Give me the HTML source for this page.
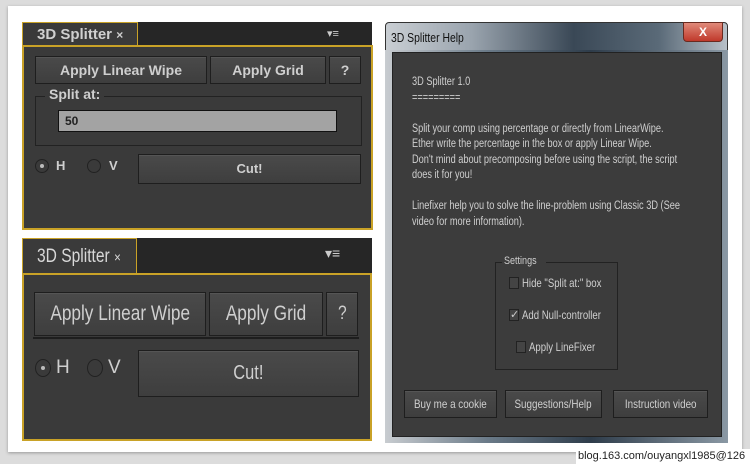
<!DOCTYPE html>
<html><head><style>
*{margin:0;padding:0;box-sizing:border-box}
body{width:750px;height:464px;background:#dcdcdc;position:relative;overflow:hidden;font-family:"Liberation Sans",sans-serif}
.abs{position:absolute}
.card{left:8px;top:6px;width:734px;height:446px;background:#fff;box-shadow:0 1px 3px #999}
.tabbar{background:#262626}
.tab{background:#3a3a3a;border:1px solid #c9a227;border-bottom:none;color:#d8d8d8}
.panel{background:#3a3a3a;border:2px solid #c9a227}
.btn{background:linear-gradient(#4a4a4a,#3e3e3e);border:1px solid #1e1e1e;color:#cfcfcf;text-align:center;box-shadow:inset 0 1px 0 #555;white-space:nowrap}
.radio{border:1px solid #222;border-radius:50%;background:#3a3a3a}
.t{color:#cfcfcf;font-size:14px}
.n{display:inline-block;transform:scaleX(0.82);transform-origin:center}
.nl{white-space:nowrap;transform:scaleX(0.8);transform-origin:left top}
</style></head><body>
<div class="abs card"></div>

<!-- panel 1 -->
<div class="abs tabbar" style="left:22px;top:22px;width:350px;height:24px"></div>
<div class="abs tab" style="left:22px;top:22px;width:116px;height:24px;font-size:15px;padding:3px 0 0 14px;font-weight:bold;color:#cfcfcf">3D Splitter <span style="font-size:12px">×</span></div>
<div class="abs" style="left:327px;top:27px;color:#ccc;font-size:11px">▾≡</div>
<div class="abs panel" style="left:22px;top:45px;width:351px;height:185px"></div>
<div class="abs btn" style="left:35px;top:56px;width:172px;height:28px;font-size:14px;line-height:26px;font-weight:bold">Apply Linear Wipe</div>
<div class="abs btn" style="left:210px;top:56px;width:116px;height:28px;font-size:14px;line-height:26px;font-weight:bold">Apply Grid</div>
<div class="abs btn" style="left:329px;top:56px;width:32px;height:28px;font-size:14px;line-height:26px;font-weight:bold">?</div>
<div class="abs" style="left:35px;top:96px;width:327px;height:50px;border:1px solid #222"></div>
<div class="abs t" style="left:45px;top:86px;background:#3a3a3a;padding:0 4px;font-weight:bold">Split at:</div>
<div class="abs" style="left:58px;top:110px;width:279px;height:22px;background:#a3a3a3;border:1px solid #111;font-size:12px;padding:3px 6px;color:#222;font-weight:bold">50</div>
<div class="abs radio" style="left:35px;top:159px;width:14px;height:14px"><div style="margin:4px;width:4px;height:4px;border-radius:50%;background:#bbb"></div></div>
<div class="abs t" style="left:56px;top:158px;font-size:13px;font-weight:bold">H</div>
<div class="abs radio" style="left:87px;top:159px;width:14px;height:14px"></div>
<div class="abs t" style="left:109px;top:158px;font-size:13px;font-weight:bold">V</div>
<div class="abs btn" style="left:138px;top:154px;width:223px;height:30px;font-size:13px;line-height:28px;font-weight:bold">Cut!</div>

<!-- panel 2 -->
<div class="abs tabbar" style="left:22px;top:238px;width:350px;height:35px"></div>
<div class="abs tab" style="left:22px;top:238px;width:115px;height:36px;font-size:19px;padding:7px 0 0 14px;white-space:nowrap"><span class="n" style="transform-origin:left">3D Splitter <span style="font-size:14px">×</span></span></div>
<div class="abs" style="left:325px;top:245px;color:#ccc;font-size:14px">▾≡</div>
<div class="abs panel" style="left:22px;top:273px;width:350px;height:168px"></div>
<div class="abs btn" style="left:34px;top:292px;width:172px;height:44px;font-size:21px;line-height:42px"><span class="n">Apply Linear Wipe</span></div>
<div class="abs btn" style="left:209px;top:292px;width:114px;height:44px;font-size:21px;line-height:42px"><span class="n">Apply Grid</span></div>
<div class="abs btn" style="left:326px;top:292px;width:32px;height:44px;font-size:19px;line-height:42px"><span class="n">?</span></div>
<div class="abs" style="left:33px;top:337px;width:326px;height:2px;background:#1e1e1e"></div>
<div class="abs radio" style="left:35px;top:359px;width:16px;height:18px"><div style="margin:6px 5px;width:4px;height:4px;border-radius:50%;background:#bbb"></div></div>
<div class="abs t" style="left:56px;top:357px;font-size:19px">H</div>
<div class="abs radio" style="left:87px;top:359px;width:16px;height:18px"></div>
<div class="abs t" style="left:108px;top:357px;font-size:19px">V</div>
<div class="abs btn" style="left:138px;top:350px;width:221px;height:47px;font-size:20px;line-height:45px"><span class="n">Cut!</span></div>

<!-- help window -->
<div class="abs" style="left:385px;top:22px;width:343px;height:421px;background:linear-gradient(90deg,#c9ced3 0%,#9aa4ae 25%,#3a4856 55%,#5a6a78 80%,#b8c0c8 100%);border:1px solid #333;border-radius:4px 4px 0 0"></div>
<div class="abs" style="left:385px;top:50px;width:343px;height:393px;background:linear-gradient(90deg,#c8ccd0,#6a7a88 30%,#2e3c4a 60%,#8a98a4 100%)"></div>
<div class="abs nl" style="left:391px;top:30px;font-size:13px;color:#111">3D Splitter Help</div>
<div class="abs" style="left:683px;top:22px;width:40px;height:20px;background:linear-gradient(#e08a7a,#c0392b);border:1px solid #6a2a20;border-radius:0 0 4px 4px;color:#fff;font-size:12px;font-weight:bold;text-align:center;line-height:18px">X</div>
<div class="abs" style="left:392px;top:52px;width:330px;height:385px;background:#3c3c3c;border:1px solid #222"></div>
<div class="abs nl" style="left:412px;top:75px;font-size:11.5px;color:#cfcfcf;line-height:15.5px">3D Splitter 1.0<br>=========<br><br>Split your comp using percentage or directly from LinearWipe.<br>Ether write the percentage in the box or apply Linear Wipe.<br>Don't mind about precomposing before using the script, the script<br>does it for you!<br><br>Linefixer help you to solve the line-problem using Classic 3D (See<br>video for more information).</div>
<div class="abs" style="left:495px;top:262px;width:123px;height:108px;border:1px solid #222"></div>
<div class="abs" style="left:502px;top:255px;font-size:11px;color:#cfcfcf;background:#3c3c3c;padding:0 2px"><span class="n" style="transform-origin:left">Settings</span></div>
<div class="abs" style="left:509px;top:277px;width:10px;height:12px;border:1px solid #222;background:#444"></div>
<div class="abs nl" style="left:522px;top:276px;font-size:12px;color:#cfcfcf">Hide "Split at:" box</div>
<div class="abs" style="left:509px;top:309px;width:10px;height:12px;border:1px solid #222;background:#444;color:#ccc;font-size:11px;line-height:10px">✓</div>
<div class="abs nl" style="left:522px;top:308px;font-size:12px;color:#cfcfcf">Add Null-controller</div>
<div class="abs" style="left:516px;top:341px;width:10px;height:12px;border:1px solid #222;background:#444"></div>
<div class="abs nl" style="left:529px;top:340px;font-size:12px;color:#cfcfcf">Apply LineFixer</div>
<div class="abs btn" style="left:404px;top:390px;width:93px;height:28px;font-size:12px;line-height:26px"><span class="n">Buy me a cookie</span></div>
<div class="abs btn" style="left:505px;top:390px;width:97px;height:28px;font-size:12px;line-height:26px"><span class="n">Suggestions/Help</span></div>
<div class="abs btn" style="left:613px;top:390px;width:95px;height:28px;font-size:12px;line-height:26px"><span class="n">Instruction video</span></div>

<div class="abs" style="left:576px;top:449px;width:174px;height:15px;background:#fff"></div>
<div class="abs" style="left:578px;top:450px;font-size:11px;color:#222">blog.163.com/ouyangxl1985@126</div>
</body></html>
